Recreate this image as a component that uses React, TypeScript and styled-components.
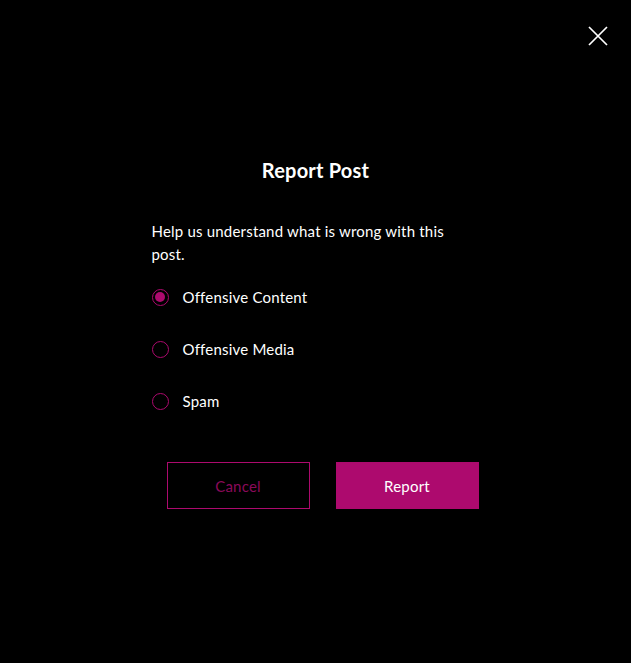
import React, { useState } from 'react';
import styled, { createGlobalStyle } from 'styled-components';

const accent = '#ad0a6e';

const GlobalStyle = createGlobalStyle`
	html, body {
		margin: 0;
		padding: 0;
		background: #000;
	}
	body {
		font-family: Lato, "Noto Sans", sans-serif;
		color: #fff;
		letter-spacing: 0.2px;
	}
`;

const Overlay = styled.div`
	position: relative;
	width: 631px;
	height: 663px;
	background: #000;
	display: flex;
	justify-content: center;
`;

const CloseButton = styled.button`
	position: absolute;
	top: 24px;
	right: 21px;
	width: 24px;
	height: 24px;
	padding: 0;
	border: none;
	background: none;
	cursor: pointer;
	display: flex;
	align-items: center;
	justify-content: center;
`;

const Dialog = styled.div`
	width: 328px;
	padding-top: 156px;
	display: flex;
	flex-direction: column;
`;

const Title = styled.h2`
	margin: 0;
	font-size: 20px;
	line-height: 28px;
	font-weight: 700;
	text-align: center;
`;

const Description = styled.p`
	margin: 36px 0 0;
	max-width: 300px;
	font-size: 15px;
	line-height: 23px;
`;

const Options = styled.div`
	margin-top: 20px;
	display: flex;
	flex-direction: column;
	gap: 30px;
`;

const OptionRow = styled.label`
	display: flex;
	align-items: center;
	gap: 14px;
	height: 22px;
	font-size: 15px;
	cursor: pointer;
`;

const RadioCircle = styled.span<{ $checked: boolean }>`
	width: 17px;
	height: 17px;
	box-sizing: border-box;
	border-radius: 50%;
	border: 1.5px solid ${accent};
	display: flex;
	align-items: center;
	justify-content: center;
	flex-shrink: 0;
	&::after {
		content: '';
		width: 10px;
		height: 10px;
		border-radius: 50%;
		background: ${accent};
		display: ${(p) => (p.$checked ? 'block' : 'none')};
	}
`;

const Buttons = styled.div`
	margin-top: 50px;
	padding-left: 15px;
	display: flex;
	gap: 26px;
`;

const Button = styled.button<{ $primary?: boolean }>`
	width: 143px;
	height: 47px;
	box-sizing: border-box;
	font-family: inherit;
	font-size: 15px;
	letter-spacing: 0.2px;
	border: 1px solid ${accent};
	background: ${(p) => (p.$primary ? accent : 'transparent')};
	color: ${(p) => (p.$primary ? '#fff' : '#8a0a5a')};
	cursor: pointer;
`;

const reasons = ['Offensive Content', 'Offensive Media', 'Spam'];

export default function App() {
	const [selected, setSelected] = useState(0);
	return (
		<>
			<GlobalStyle />
			<Overlay>
				<CloseButton aria-label="Close">
					<svg width="20" height="20" viewBox="0 0 20 20">
						<path d="M1 1L19 19M19 1L1 19" stroke="#fff" strokeWidth="1.7" />
					</svg>
				</CloseButton>
				<Dialog>
					<Title>Report Post</Title>
					<Description>Help us understand what is wrong with this post.</Description>
					<Options>
						{reasons.map((r, i) => (
							<OptionRow key={r} onClick={() => setSelected(i)}>
								<RadioCircle $checked={selected === i} />
								{r}
							</OptionRow>
						))}
					</Options>
					<Buttons>
						<Button>Cancel</Button>
						<Button $primary>Report</Button>
					</Buttons>
				</Dialog>
			</Overlay>
		</>
	);
}
